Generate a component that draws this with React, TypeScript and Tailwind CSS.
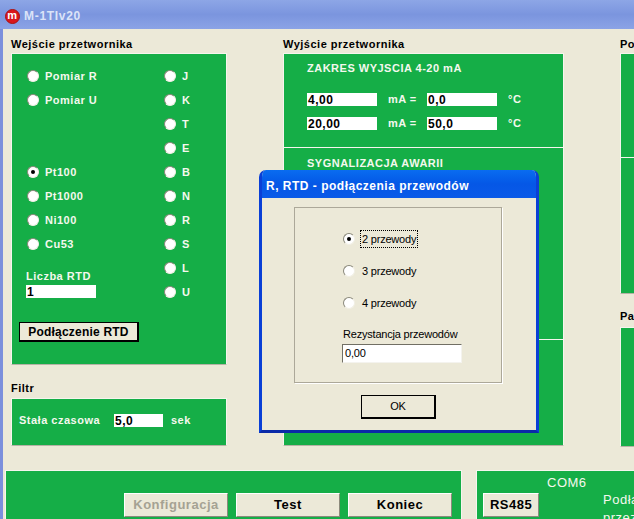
import React from 'react'

const Radio = ({ checked = false }: { checked?: boolean }) => (
  <span className="w-[12px] h-[12px] shrink-0 rounded-full bg-white border border-t-[#8a887a] border-l-[#8a887a] border-r-[#f1efe4] border-b-[#f1efe4] flex items-center justify-center">
    {checked && <span className="w-[4px] h-[4px] rounded-full bg-black" />}
  </span>
)

const Option = ({ label, checked }: { label?: string; checked?: boolean }) => (
  <div className="h-[24px] flex items-center gap-[6px] text-[#f4f8ee]">
    <Radio checked={checked} />
    <span>{label}</span>
  </div>
)

const Field = ({ value, className }: { value: string; className: string }) => (
  <div className={`h-[13px] bg-white text-black leading-[14px] pl-[1px] text-[12px] overflow-hidden ${className}`}>{value}</div>
)

const Panel = ({ className, children }: { className?: string; children?: React.ReactNode }) => (
  <div className={`bg-[#15ae47] border border-t-[#f6f5ee] border-l-[#f6f5ee] border-r-[#f6f5ee] border-b-[#b5b3a5] ${className ?? ''}`}>
    {children}
  </div>
)

const Heading = ({ children }: { children: React.ReactNode }) => (
  <div className="h-[16px] leading-[16px] text-black">{children}</div>
)

const RaisedButton = ({ children, className, disabled }: { children: React.ReactNode; className?: string; disabled?: boolean }) => (
  <button className={`h-[24px] bg-[#ece9d8] border border-t-white border-l-white border-r-[#8c8a7c] border-b-[#8c8a7c] text-[13px] ${disabled ? 'text-[#a5a293]' : 'text-black'} ${className ?? ''}`}>
    {children}
  </button>
)

export default function App() {
  const left = [
    { label: 'Pomiar R' },
    { label: 'Pomiar U' },
    null,
    null,
    { label: 'Pt100', checked: true },
    { label: 'Pt1000' },
    { label: 'Ni100' },
    { label: 'Cu53' },
  ]
  const types = ['J', 'K', 'T', 'E', 'B', 'N', 'R', 'S', 'L', 'U']

  return (
    <div className="relative w-[634px] h-[519px] overflow-hidden bg-[#ece9d8] flex flex-col font-['Liberation_Sans',sans-serif] text-[11px] font-bold tracking-[0.5px]">
      {/* inactive title bar */}
      <div className="h-[29px] shrink-0 bg-gradient-to-b from-[#8da6e6] via-[#7b95de] to-[#8ba3e6] flex items-center pl-[5px] pt-[3px] gap-[4px]">
        <div className="w-[15px] h-[15px] rounded-full bg-[#d9161c] border border-[#a11] flex items-center justify-center text-white text-[11px] leading-none pb-[2px]">m</div>
        <span className="text-[12px] text-[#dbe3f8] tracking-[0.7px]">M-1TIv20</span>
      </div>

      <div className="flex-1 min-h-0 border-l-[3px] border-[#7b8fdc] flex flex-col">
        <div className="flex pl-[8px] pt-[7px]">
          {/* left column */}
          <div className="w-[216px] shrink-0">
            <Heading>Wejście przetwornika</Heading>
            <Panel className="h-[312px] mt-[1px] flex">
              <div className="w-[152px] pl-[7px] pt-[10px]">
                <div className="ml-[8px]">
                  {left.map((o, i) =>
                    o ? <Option key={i} label={o.label} checked={o.checked} /> : <div key={i} className="h-[24px]" />
                  )}
                </div>
                <div className="ml-[7px] mt-[13px] text-[#f4f8ee] leading-[14px]">Liczba RTD</div>
                <Field value="1" className="ml-[7px] w-[70px] mt-[2px]" />
                <button className="mt-[24px] w-[120px] h-[20px] bg-[#ece9d8] border border-black border-r-[2px] border-b-[2px] text-black text-[12px] tracking-[0.2px]">
                  Podłączenie RTD
                </button>
              </div>
              <div className="pt-[10px]">
                {types.map(t => <Option key={t} label={t} />)}
              </div>
            </Panel>
            <div className="mt-[15px]"><Heading>Filtr</Heading></div>
            <Panel className="h-[48px] mt-[2px] flex items-center pl-[7px] pb-[3px] text-[#f4f8ee]">
              <span className="w-[95px]">Stała czasowa</span>
              <Field value="5,0" className="w-[49px]" />
              <span className="ml-[8px]">sek</span>
            </Panel>
          </div>

          {/* middle column */}
          <div className="w-[281px] shrink-0 ml-[56px]">
            <Heading>Wyjście przetwornika</Heading>
            <Panel className="h-[393px] mt-[1px] flex flex-col text-[#f4f8ee]">
              <div className="h-[94px] shrink-0 border-b border-[#f6f5ee] pl-[23px] pt-[7px]">
                <div className="leading-[14px]">ZAKRES WYJSCIA 4-20 mA</div>
                <div className="mt-[18px] flex items-center h-[13px]">
                  <Field value="4,00" className="w-[70px]" />
                  <span className="w-[50px] pl-[11px]">mA =</span>
                  <Field value="0,0" className="w-[70px]" />
                  <span className="pl-[11px]">°C</span>
                </div>
                <div className="mt-[11px] flex items-center h-[13px]">
                  <Field value="20,00" className="w-[70px]" />
                  <span className="w-[50px] pl-[11px]">mA =</span>
                  <Field value="50,0" className="w-[70px]" />
                  <span className="pl-[11px]">°C</span>
                </div>
              </div>
              <div className="h-[192px] shrink-0 border-b border-[#f6f5ee] pl-[23px] pt-[8px]">
                <div className="leading-[14px]">SYGNALIZACJA AWARII</div>
              </div>
            </Panel>
          </div>

          {/* right column, runs off the window */}
          <div className="w-[120px] shrink-0 ml-[56px]">
            <Heading>Podłączenie</Heading>
            <Panel className="h-[241px] mt-[1px]">
              <div className="h-[104px] border-b border-[#f6f5ee]" />
            </Panel>
            <div className="mt-[14px]"><Heading>Parametry</Heading></div>
            <Panel className="h-[120px] mt-[3px]" />
          </div>
        </div>

        {/* bottom bar */}
        <div className="flex pl-[2px] mt-[23px]">
          <Panel className="w-[457px] h-[60px] shrink-0 pt-[22px] pr-[9px] flex justify-end gap-[8px]">
            <RaisedButton disabled className="w-[104px]">Konfiguracja</RaisedButton>
            <RaisedButton className="w-[104px]">Test</RaisedButton>
            <RaisedButton className="w-[104px]">Koniec</RaisedButton>
          </Panel>
          <Panel className="w-[190px] h-[60px] shrink-0 ml-[14px] flex text-[#f4f8ee] text-[13px] font-normal">
            <div className="pt-[22px] pl-[6px] shrink-0">
              <RaisedButton className="w-[56px] font-bold">RS485</RaisedButton>
            </div>
            <div className="pt-[2px] pl-[8px] w-[64px] shrink-0">COM6</div>
            <div className="pt-[20px] whitespace-nowrap leading-[18px]">
              <div>Podłączenie</div>
              <div>przez COM</div>
            </div>
          </Panel>
        </div>
      </div>

      {/* modal dialog */}
      <div className="absolute left-[259px] top-[170px] w-[280px] h-[263px] flex flex-col rounded-t-[7px] overflow-hidden border-x-[3px] border-b-[3px] border-x-[#0a3fd6] border-b-[#0a2aa8] bg-[#ece9d8] font-normal tracking-[-0.2px] text-black">
        <div className="-mx-[3px] h-[28px] shrink-0 bg-gradient-to-b from-[#0a6cf0] via-[#0557e6] to-[#0a5ae8] pl-[7px] pt-[3px] flex items-center text-white text-[12px] font-bold tracking-[0.5px]">
          R, RTD - podłączenia przewodów
        </div>
        <div className="ml-[32px] mt-[9px] w-[208px] h-[176px] border border-[#aca899] shadow-[1px_1px_0_#fff] pl-[48px] pt-[21px]">
          <div className="flex flex-col gap-[12px]">
            <div className="h-[20px] flex items-center gap-[5px]">
              <Radio checked />
              <span className="border border-dotted border-black px-[1px]">2 przewody</span>
            </div>
            <div className="h-[20px] flex items-center gap-[7px]">
              <Radio />
              <span>3 przewody</span>
            </div>
            <div className="h-[20px] flex items-center gap-[7px]">
              <Radio />
              <span>4 przewody</span>
            </div>
          </div>
          <div className="mt-[14px] leading-[14px] whitespace-nowrap">Rezystancja przewodów</div>
          <div className="mt-[3px] -ml-[1px] w-[120px] h-[19px] bg-white border border-t-[#716f64] border-l-[#716f64] border-r-[#f4f3ee] border-b-[#f4f3ee] pl-[2px] leading-[17px]">0,00</div>
        </div>
        <button className="mt-[12px] ml-[99px] w-[75px] h-[24px] bg-[#ece9d8] border border-black border-r-[2px] border-b-[2px]">OK</button>
      </div>
    </div>
  )
}
